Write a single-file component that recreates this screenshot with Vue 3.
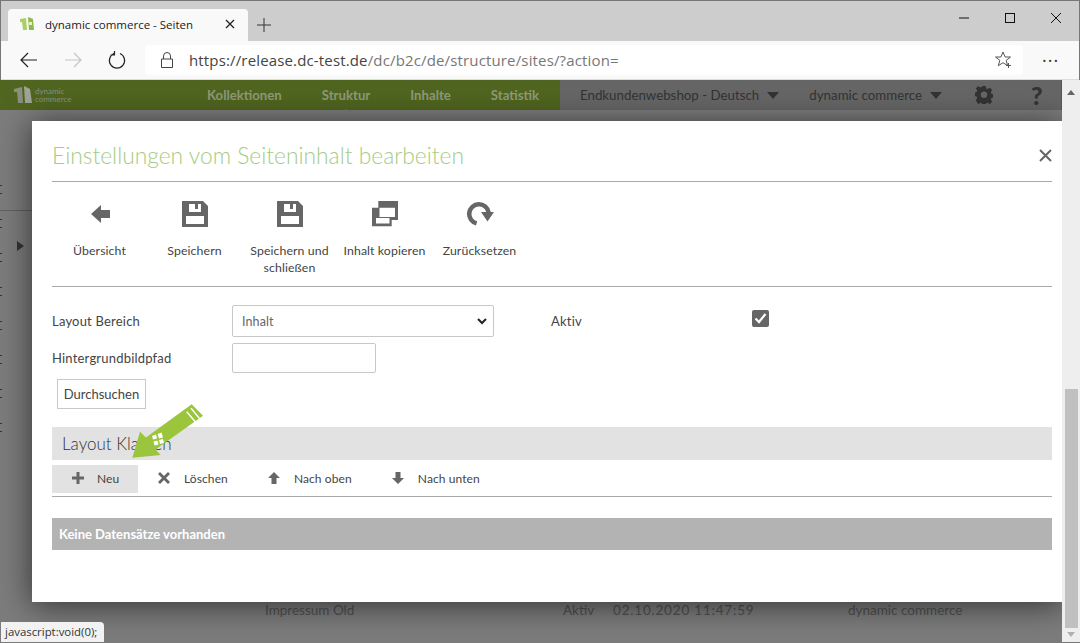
<template>
	<div class="window">
		<div class="tabstrip">
			<div class="tab">
				<svg class="favicon" width="16" height="16" viewBox="0 0 16 16">
					<path d="M1 3l6-1 1 12-4 0-1-8-2 0z" fill="#a9d063" />
					<path d="M9 1l5 2 1 11-5 0z" fill="#8cbc45" />
					<path d="M10 6l3 0 0 3-3 0z" fill="#e4f1c8" />
				</svg>
				<span class="tab-title">dynamic commerce - Seiten</span>
				<svg class="tab-close" width="10" height="10" viewBox="0 0 10 10">
					<path d="M1 1l8 8M9 1l-8 8" stroke="#222" stroke-width="1.3" />
				</svg>
			</div>
			<svg class="new-tab" width="14" height="14" viewBox="0 0 14 14">
				<path d="M7 0v14M0 7h14" stroke="#333" stroke-width="1" />
			</svg>
			<div class="win-controls">
				<svg width="10" height="10" viewBox="0 0 10 10"><path d="M0 5h10" stroke="#111" /></svg>
				<svg width="10" height="10" viewBox="0 0 10 10"><rect x=".5" y=".5" width="9" height="9" fill="none" stroke="#111" /></svg>
				<svg width="10" height="10" viewBox="0 0 10 10"><path d="M0 0l10 10M10 0l-10 10" stroke="#111" /></svg>
			</div>
		</div>

		<div class="toolbar">
			<svg class="tool back" width="18" height="16" viewBox="0 0 18 16">
				<path d="M17 8H1M8 1L1 8l7 7" fill="none" stroke="#222" stroke-width="1.2" />
			</svg>
			<svg class="tool fwd" width="18" height="16" viewBox="0 0 18 16">
				<path d="M1 8h16M10 1l7 7-7 7" fill="none" stroke="#c4c4c4" stroke-width="1.2" />
			</svg>
			<svg class="tool reload" width="18" height="18" viewBox="0 0 18 18">
				<path d="M6 2.5A7.6 7.6 0 1 0 12 2.5M6.5 0v4h-4" fill="none" stroke="#222" stroke-width="1.2" />
			</svg>
			<div class="address">
				<svg class="lock" width="12" height="16" viewBox="0 0 12 16">
					<path d="M.5 7h11v8.5H.5zM2.5 7V4a3.5 3.5 0 0 1 7 0v3" fill="none" stroke="#444" />
				</svg>
				<span class="url"><span class="url-host">https://release.dc-test.de</span>/dc/b2c/de/structure/sites/?action=</span>
				<svg class="star" width="17" height="17" viewBox="0 0 17 17">
					<path d="M8 1l2.100 5h5.400l-4.300 3.400 1.500 5.300L8 11.700l-4.700 3 1.500-5.300L.5 6h5.400z" fill="none" stroke="#555" />
					<path d="M13.500 12v5M11 14.500h5" stroke="#555" />
				</svg>
			</div>
			<span class="more">&middot;&middot;&middot;</span>
		</div>

		<div class="page">
			<nav class="appnav">
				<div class="brand">
					<svg width="20" height="20" viewBox="0 0 20 20">
						<path d="M1 4l8-2 1 16-5 0-1-11-3 0z" fill="#8b8f7e" />
						<path d="M11 1l6 3 2 14-7 0z" fill="#a0a495" />
					</svg>
					<span class="brand-name">dynamic<br />commerce</span>
				</div>
				<div class="nav-items">
					<a
						v-for="item in navItems"
						:key="item"
						class="nav-item"
						:class="{ current: item === 'Struktur' }"
					>{{ item }}</a>
				</div>
				<div class="nav-right">
					<span class="nav-select shop">Endkundenwebshop - Deutsch <i class="caret"></i></span>
					<span class="nav-select">dynamic commerce <i class="caret"></i></span>
					<svg class="gear" width="18" height="18" viewBox="0 0 18 18">
						<path d="M7.300 0h3.400l.5 2.500 1.500.6 2.100-1.400 2.400 2.400-1.400 2.100.6 1.500 2.500.5v3.400l-2.500.5-.6 1.500 1.400 2.100-2.400 2.400-2.100-1.400-1.500.6-.5 2.500H7.300l-.5-2.500-1.500-.6-2.100 1.400L.8 14.200l1.400-2.100-.6-1.500L-.9 10V6.600l2.500-.5.6-1.500L.8 2.500 3.200.1l2.100 1.400 1.500-.6zM9 5.500a3 3 0 1 0 0 6.400 3 3 0 0 0 0-6.400z" fill="#333" fill-rule="evenodd" />
					</svg>
					<span class="help">?</span>
				</div>
			</nav>

			<div class="backdrop">
				<span class="ticks"></span>
				<span class="row-line"></span>
				<span class="expander"></span>
				<div class="bg-row">
					<span class="bg-name">Impressum Old</span>
					<span class="bg-state">Aktiv</span>
					<span class="bg-date">02.10.2020 11:47:59</span>
					<span class="bg-user">dynamic commerce</span>
				</div>
			</div>

			<section class="modal">
				<header class="modal-head">
					<h2>Einstellungen vom Seiteninhalt bearbeiten</h2>
					<svg class="modal-close" width="13" height="13" viewBox="0 0 13 13">
						<path d="M1 1l11 11M12 1L1 12" stroke="#666" stroke-width="2" />
					</svg>
				</header>

				<div class="actions">
					<div v-for="action in actions" :key="action.label" class="action">
						<svg width="28" height="28" viewBox="0 0 28 28">
							<path :d="action.icon" fill="#666" fill-rule="evenodd" />
						</svg>
						<span>{{ action.label }}</span>
					</div>
				</div>

				<form class="form">
					<div class="form-row first">
						<label>Layout Bereich</label>
						<div class="select">Inhalt
							<svg width="10" height="7" viewBox="0 0 10 7"><path d="M1 1l4 4 4-4" fill="none" stroke="#222" stroke-width="2" /></svg>
						</div>
						<label class="aktiv">Aktiv</label>
						<span class="check">
							<svg width="13" height="11" viewBox="0 0 13 11"><path d="M1.500 5.500l3.500 3.500 6.500-8" fill="none" stroke="#fff" stroke-width="2.200" /></svg>
						</span>
					</div>
					<div class="form-row">
						<label>Hintergrundbildpfad</label>
						<div class="text-input"></div>
					</div>
					<button type="button" class="browse">Durchsuchen</button>
				</form>

				<h3 class="section">Layout Klassen</h3>
				<div class="list-tools">
					<div
						v-for="tool in listTools"
						:key="tool.label"
						class="list-tool"
						:class="{ active: tool.active }"
					>
						<svg width="14" height="14" viewBox="0 0 14 14">
							<path :d="tool.icon" fill="#666" />
						</svg>
						<span>{{ tool.label }}</span>
					</div>
				</div>
				<div class="empty">Keine Datensätze vorhanden</div>

				<svg class="pointer" width="80" height="62" viewBox="130 402 80 62">
					<path d="M191.700 404.300L203 415.700 155.500 449.500 160.700 455 132.300 457.700 140 431.700 146 437.500z" fill="#9bc53d" />
					<path d="M186.700 411.700l9 10.600M191 408.300l9 10.700" stroke="#fff" stroke-width="1.400" />
					<path d="M152 436l4-1.500 1 4-4 1zM157.500 434l4-1.500 1.500 5-4 1zM153.500 441.500l4-1 1 4-4 1zM159 440l4-1 1 4-4 1z" fill="#fff" />
				</svg>
			</section>

			<div class="scrollbar">
				<i class="scroll-up"></i>
				<div class="scroll-track"><div class="scroll-thumb"></div></div>
				<i class="scroll-down"></i>
			</div>

			<div class="status">javascript:void(0);</div>
		</div>
	</div>
</template>

<script setup>
const navItems = ['Kollektionen', 'Struktur', 'Inhalte', 'Statistik']

const floppy = 'M1 1h21l5 5v21H1zM8 4v8h12V4h-3v5h-3V4zM5 16v8h18v-8z'

const actions = [
	{ label: 'Übersicht', icon: 'M5 14l10-9v5h9v8h-9v5z' },
	{ label: 'Speichern', icon: floppy },
	{ label: 'Speichern und schließen', icon: floppy },
	{ label: 'Inhalt kopieren', icon: 'M7.300 1H27v19h-6.300v6.300H1V7.700h6.300zM8.500 7.700H24V17H8.500zM5 18h13.500v5.500H5z' },
	{ label: 'Zurücksetzen', icon: 'M10 25.600A12 12 0 1 1 24.800 12H20.200A7.500 7.500 0 1 0 11.200 21.300zM15 12h13l-6.500 9.500z' }
]

const listTools = [
	{ label: 'Neu', icon: 'M5.500 1h3v4.500H13v3H8.500V13h-3V8.500H1v-3h4.500z', active: true },
	{ label: 'Löschen', icon: 'M3 1l4 4 4-4 2 2-4 4 4 4-2 2-4-4-4 4-2-2 4-4-4-4z' },
	{ label: 'Nach oben', icon: 'M7 1l6 6H9.500v6h-5V7H1z' },
	{ label: 'Nach unten', icon: 'M7 13L1 7h3.500V1h5v6H13z' }
]
</script>

<style scoped>
.window {
	width: 1080px;
	height: 643px;
	display: flex;
	flex-direction: column;
	overflow: hidden;
	font-family: "Open Sans", "Noto Sans", sans-serif;
	color: #333;
	outline: 1px solid #777;
	outline-offset: -1px;
}

.tabstrip {
	height: 41px;
	flex-shrink: 0;
	box-sizing: border-box;
	padding: 9px 0 0 8px;
	background: #cdcdcd;
	display: flex;
	align-items: flex-start;
}

.tab {
	width: 240px;
	height: 32px;
	box-sizing: border-box;
	padding: 0 13px 2px 11px;
	background: #f9f9f9;
	border-radius: 4px 4px 0 0;
	display: flex;
	align-items: center;
}

.tab-title {
	margin-left: 10px;
	flex: 1;
	font-size: 11.5px;
	color: #222;
}

.new-tab {
	margin: 9px 0 0 9px;
}

.win-controls {
	margin: 0 19px 0 auto;
	padding-top: 4px;
	display: flex;
	gap: 36px;
}

.toolbar {
	height: 39px;
	flex-shrink: 0;
	box-sizing: border-box;
	padding: 4px 0 5px;
	background: #f9f9f9;
	border-bottom: 1px solid #ddd;
	display: flex;
	align-items: center;
}

.tool {
	flex-shrink: 0;
}

.back {
	margin-left: 20px;
}

.fwd {
	margin-left: 26px;
}

.reload {
	margin-left: 26px;
}

.address {
	margin-left: 19px;
	width: 878px;
	height: 30px;
	box-sizing: border-box;
	padding: 0 11px 0 16px;
	background: #fff;
	border-radius: 4px;
	display: flex;
	align-items: center;
}

.url {
	margin-left: 16px;
	flex: 1;
	font-size: 15px;
	letter-spacing: .15px;
	color: #777;
}

.url-host {
	color: #444;
}

.more {
	margin-left: 19px;
	font-size: 18px;
	letter-spacing: 1px;
	line-height: 1;
	color: #333;
}

.page {
	position: relative;
	flex: 1;
	min-height: 0;
	display: flex;
	flex-direction: column;
}

.appnav {
	height: 30px;
	flex-shrink: 0;
	background: #50651f;
	display: flex;
	align-items: center;
	margin-right: 18px;
	font-family: "Lato", "Open Sans", sans-serif;
}

.brand {
	width: 207px;
	box-sizing: border-box;
	padding-left: 13px;
	display: flex;
	align-items: center;
	gap: 2px;
}

.brand-name {
	font-size: 8px;
	line-height: 8px;
	color: #8b8f7e;
}

.nav-items {
	display: flex;
	gap: 40px;
}

.nav-item {
	position: relative;
	font-size: 13.2px;
	font-weight: 700;
	color: #8f9a78;
}

.nav-item.current::after {
	content: '';
	position: absolute;
	left: 50%;
	bottom: -10px;
	margin-left: -4px;
	border-style: solid;
	border-width: 0 4px 4px;
	border-color: transparent transparent #7c7c7c;
}

.nav-right {
	margin-left: auto;
	width: 501px;
	margin-right: 1px;
	height: 100%;
	box-sizing: border-box;
	padding-left: 20px;
	background: #666;
	display: flex;
	align-items: center;
	font-size: 13.3px;
	color: #333;
}

.nav-select {
	display: flex;
	align-items: center;
	gap: 8px;
	margin-right: 30px;
}

.caret {
	width: 0;
	height: 0;
	border-style: solid;
	border-width: 7px 6px 0;
	border-color: #333 transparent transparent;
}

.gear {
	margin-left: 3px;
}

.help {
	margin-left: 38px;
	font-size: 25px;
	font-weight: 900;
	line-height: 1;
}

.backdrop {
	flex: 1;
	min-height: 0;
	margin-right: 18px;
	background: #7c7c7c;
	position: relative;
}

.ticks {
	position: absolute;
	left: 0;
	top: 75px;
	width: 2px;
	height: 270px;
	background: repeating-linear-gradient(180deg, #333 0, #333 1px, transparent 1px, transparent 8px, #333 8px, #333 9px, transparent 9px, transparent 34px);
}

.row-line {
	position: absolute;
	left: 0;
	right: 0;
	top: 100px;
	height: 1px;
	background: #606060;
}

.expander {
	position: absolute;
	left: 17px;
	top: 131px;
	border-style: solid;
	border-width: 5px 0 5px 7px;
	border-color: transparent transparent transparent #333;
}

.bg-row {
	position: absolute;
	left: 0;
	right: 0;
	bottom: 0;
	height: 41px;
	font-size: 13.5px;
	color: #505050;
	font-family: "Lato", "Open Sans", sans-serif;
}

.bg-row span {
	position: absolute;
	top: 0;
}

.bg-name { left: 265px; }
.bg-state { left: 563px; }
.bg-date { left: 613px; letter-spacing: .8px; }
.bg-user { left: 848px; }

.scrollbar {
	position: absolute;
	top: 0;
	right: 0;
	bottom: 1px;
	width: 18px;
	background: #eee;
	display: flex;
	flex-direction: column;
	align-items: center;
}

.scroll-up {
	margin-top: 10px;
	border-style: solid;
	border-width: 0 4px 5px;
	border-color: transparent transparent #666;
}

.scroll-track {
	flex: 1;
	width: 13px;
	padding-top: 294px;
	padding-bottom: 4px;
	box-sizing: border-box;
	display: flex;
}

.scroll-thumb {
	flex: 1;
	background: #c0c0c0;
}

.scroll-down {
	margin-bottom: 5px;
	border-style: solid;
	border-width: 5px 4px 0;
	border-color: #b0b0b0 transparent transparent;
}

.modal {
	position: absolute;
	left: 32px;
	top: 41px;
	width: 1030px;
	height: 481px;
	box-sizing: border-box;
	padding: 0 10px 0 20px;
	background: #fff;
	box-shadow: 0 3px 30px rgba(0, 0, 0, .6);
	font-family: "Lato", "Open Sans", sans-serif;
	font-size: 13px;
	letter-spacing: .1px;
	color: #444;
}

.modal-head {
	height: 61px;
	box-sizing: border-box;
	padding: 17px 0 0;
	border-bottom: 1px solid #aaa;
	display: flex;
	justify-content: space-between;
}

.modal-head h2 {
	margin: 0;
	font-size: 22.8px;
	font-weight: 300;
	letter-spacing: 0;
	line-height: 34px;
	color: #a5cb84;
}

.modal-close {
	margin: 11px 0 0;
}

.actions {
	height: 105px;
	box-sizing: border-box;
	padding-top: 18px;
	border-bottom: 1px solid #aaa;
	display: grid;
	grid-template-columns: repeat(5, 95px);
}

.action {
	display: flex;
	flex-direction: column;
	align-items: center;
	text-align: center;
	line-height: 17px;
	font-size: 12.3px;
}

.action svg {
	margin-bottom: 14px;
}

.action span {
	width: 90px;
}

.form {
	padding-top: 18px;
}

.form-row {
	display: flex;
	align-items: center;
	height: 30px;
	margin-bottom: 6px;
}

.form-row.first {
	height: 32px;
}

.form-row label {
	width: 180px;
	flex-shrink: 0;
	letter-spacing: .2px;
}

.select {
	width: 262px;
	height: 32px;
	box-sizing: border-box;
	padding: 0 6px 0 9px;
	border: 1px solid #c8c8c8;
	border-radius: 2px;
	display: flex;
	align-items: center;
	justify-content: space-between;
	font-size: 12.5px;
	color: #666;
}

.form-row .aktiv {
	margin-left: 57px;
	width: 201px;
}

.check {
	width: 17px;
	height: 17px;
	margin-top: -6px;
	background: #666;
	border-radius: 2px;
	display: flex;
	align-items: center;
	justify-content: center;
}

.text-input {
	width: 144px;
	height: 30px;
	box-sizing: border-box;
	border: 1px solid #c8c8c8;
	border-radius: 2px;
}

.browse {
	display: block;
	margin-left: 5px;
	width: 89px;
	height: 30px;
	padding: 0;
	border: 1px solid #c8c8c8;
	background: #fff;
	font: inherit;
	color: #444;
}

.section {
	margin: 18px 0 0;
	height: 33px;
	padding-left: 10px;
	background: #e2e2e2;
	font-size: 17px;
	font-weight: 300;
	line-height: 33px;
	letter-spacing: 0;
	color: #333;
}

.list-tools {
	height: 37px;
	box-sizing: border-box;
	padding-top: 5px;
	border-bottom: 1px solid #aaa;
	display: flex;
	align-items: flex-start;
}

.list-tool {
	height: 28px;
	box-sizing: border-box;
	padding: 0 19px 2px;
	display: flex;
	align-items: center;
	gap: 13px;
	font-size: 12px;
}

.list-tool + .list-tool + .list-tool {
	margin-left: 1px;
}

.list-tool.active {
	width: 86px;
	padding-right: 0;
	gap: 12px;
	background: #e2e2e2;
}

.empty {
	margin-top: 21px;
	height: 32px;
	padding-left: 7px;
	background: #b3b3b3;
	color: #fff;
	font-weight: 700;
	letter-spacing: 0;
	line-height: 32px;
}

.pointer {
	position: absolute;
	left: 98px;
	top: 281px;
}

.status {
	position: absolute;
	left: 1px;
	bottom: 1px;
	height: 20px;
	padding: 0 7px 0 4px;
	background: #f2f2f2;
	border-radius: 0 4px 0 0;
	font-family: "Open Sans", sans-serif;
	font-size: 11.4px;
	line-height: 20px;
	color: #333;
}
</style>
